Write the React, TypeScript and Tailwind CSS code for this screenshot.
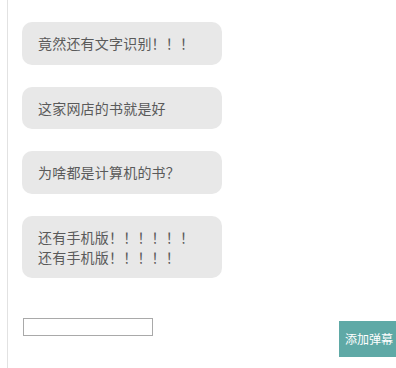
import React from "react";

const msgs: React.ReactNode[] = [
  "竟然还有文字识别！！！",
  "这家网店的书就是好",
  "为啥都是计算机的书？",
  <>
    还有手机版！！！！！！
    <br />
    还有手机版！！！！！
  </>,
];

export default function App() {
  return (
    <div
      className="relative flex h-[368px] w-[396px] overflow-hidden bg-white"
      style={{ fontFamily: '"Noto Sans CJK SC", "Noto Sans", sans-serif' }}
    >
      <div className="w-[7px] shrink-0" />
      <div className="w-px shrink-0 bg-[#e2e2e2]" />
      <div className="flex flex-1 flex-col pl-[14px]">
        <div className="flex flex-col gap-[22px] pt-[22px]">
          {msgs.map((m, i) => (
            <div
              key={i}
              className="w-[200px] rounded-[10px] bg-[#e8e8e8] pt-[11px] pb-[11.5px] pl-[16px] pr-[8px] text-[14px] leading-[20px] tracking-[0.2px] text-[#5a5a5a]"
            >
              {m}
            </div>
          ))}
        </div>
        <div className="mt-[40px] flex items-start justify-between">
          <input
            type="text"
            className="ml-px h-[18px] w-[130px] border border-[#a9a9a9] bg-white outline-none"
          />
          <button className="mt-[3px] h-[36px] w-[57px] bg-[#5fa9a6] pl-[6px] text-left text-[12px] leading-[36px] text-white">
            添加弹幕
          </button>
        </div>
      </div>
    </div>
  );
}
